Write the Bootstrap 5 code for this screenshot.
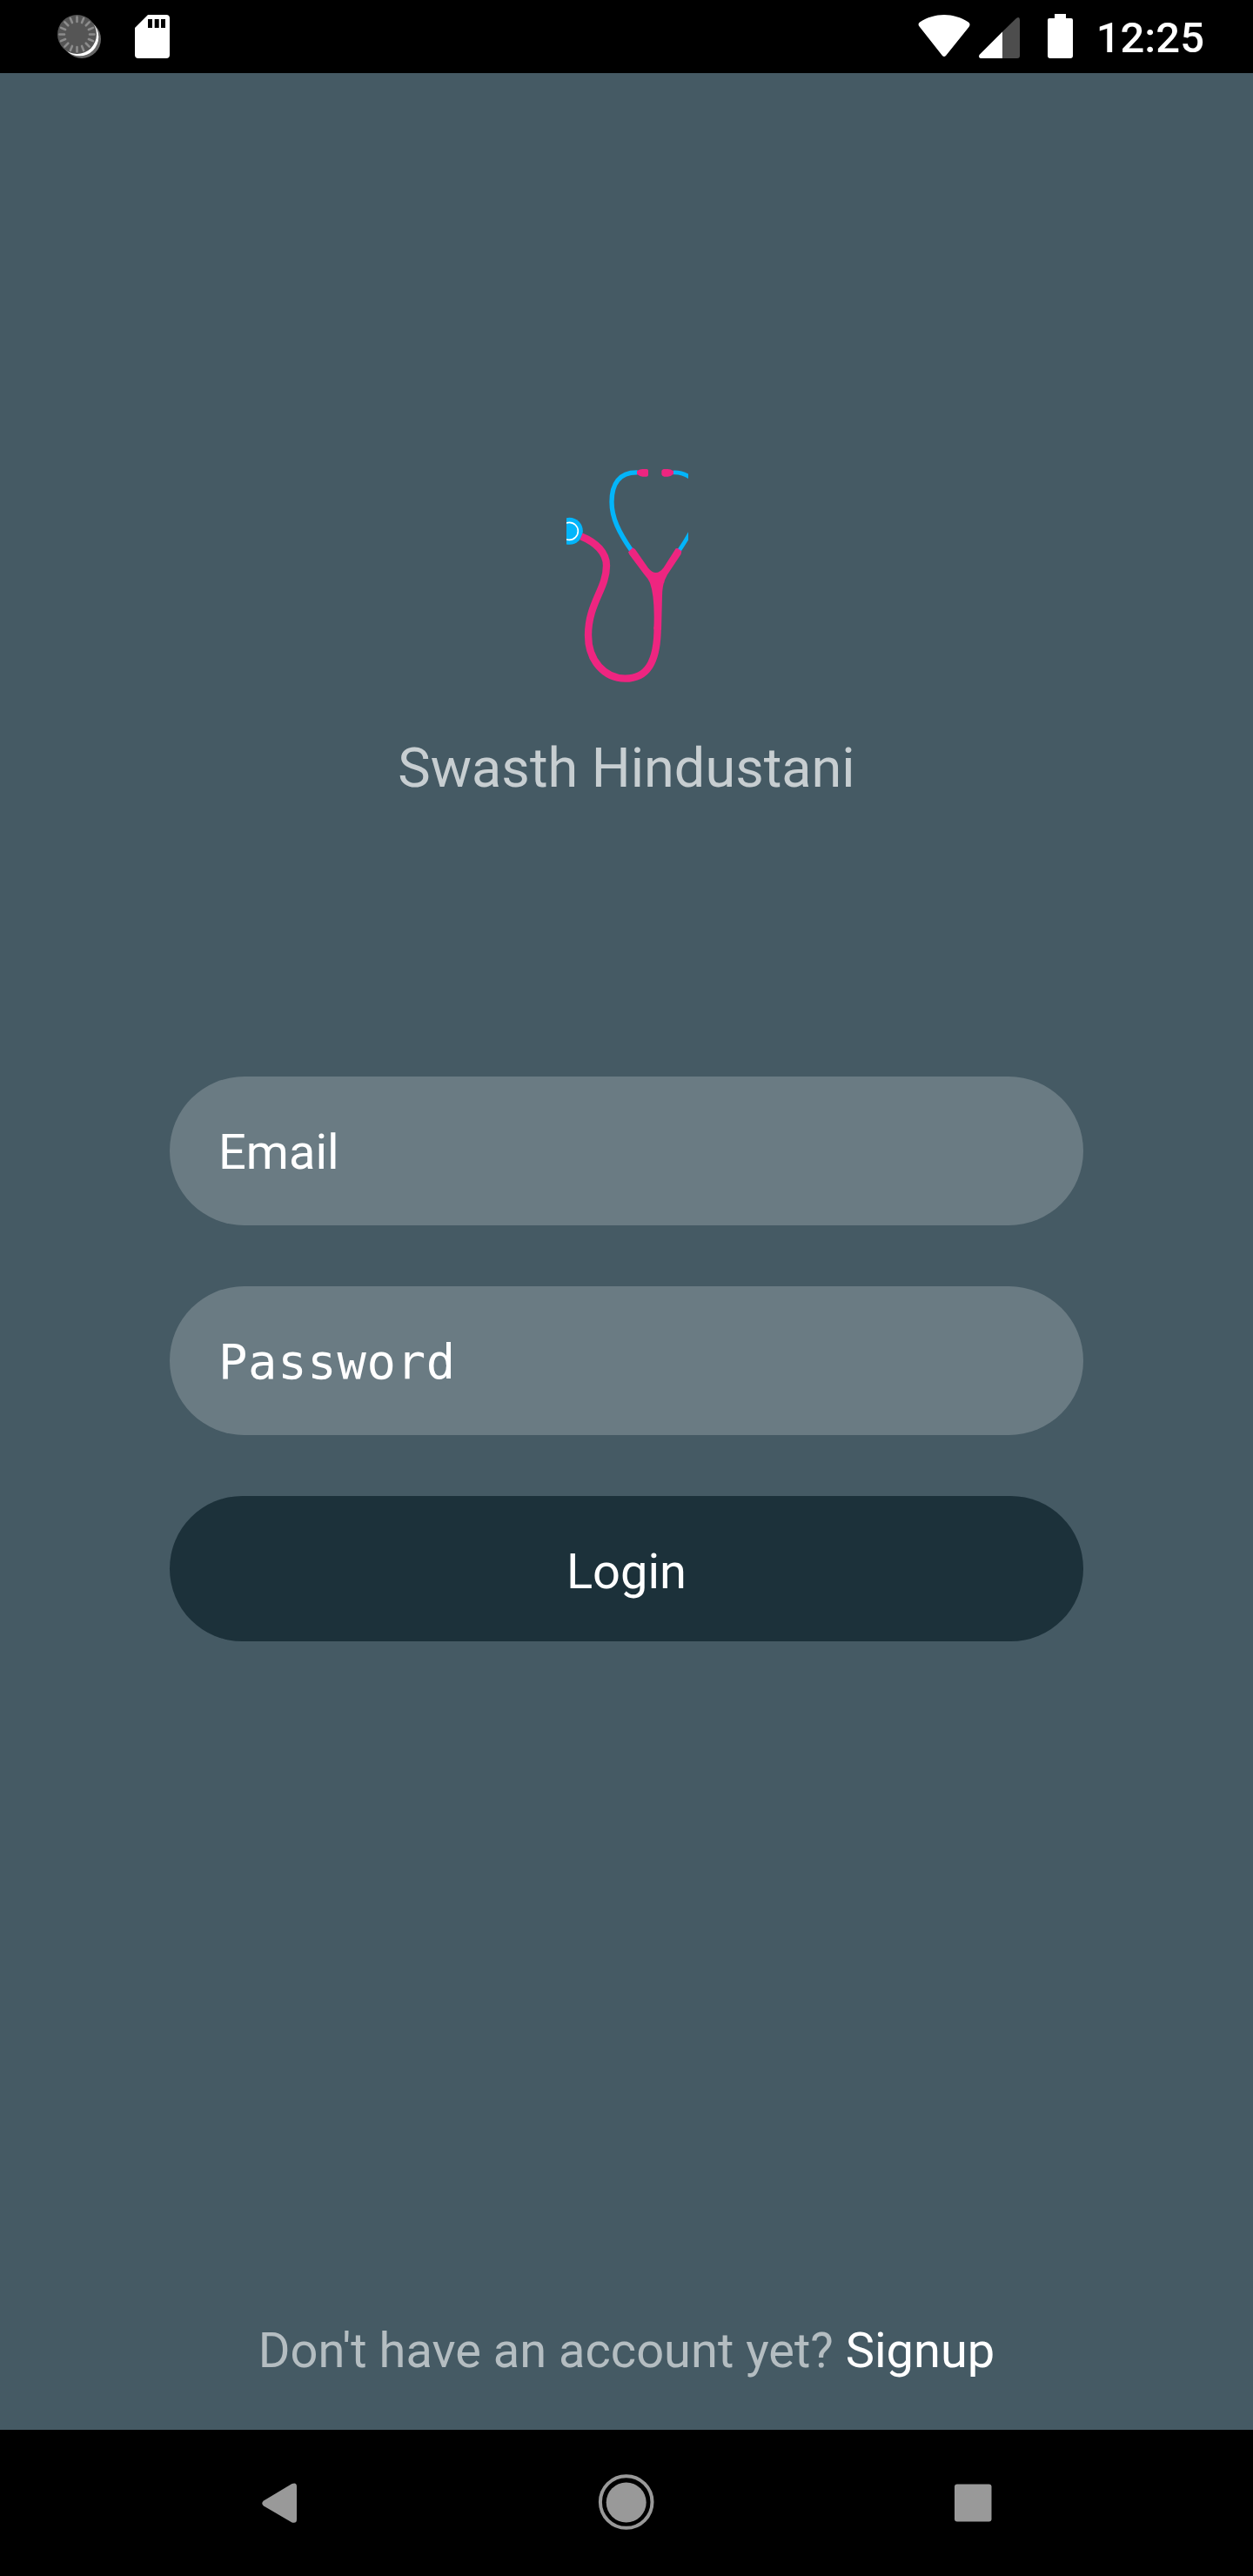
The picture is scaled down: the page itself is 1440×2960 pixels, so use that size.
<!DOCTYPE html>
<html lang="en">
<head>
<meta charset="utf-8">
<meta name="viewport" content="width=device-width, initial-scale=1">
<title>Swasth Hindustani</title>
<link rel="stylesheet" href="https://cdn.jsdelivr.net/npm/bootstrap@5.3.0/dist/css/bootstrap.min.css">
<style>
body{background:#455a64;font-family:Roboto,sans-serif;font-size:56px;line-height:66px}
.phone{width:1440px;height:2960px}
.statusbar{height:84px;flex:none;padding:0 56px 0 66px}
.clock{font-size:49px;font-weight:500;line-height:88px;height:84px;margin-left:25px}
.brand{padding-top:452px}
.brand-name{font-size:63px;line-height:74px;margin-top:60px;color:rgba(255,255,255,.7)}
.login-form{width:1050px;gap:70px;margin-top:317px}
.field{height:171px;padding:2px 56px 0;border:0;background:rgba(255,255,255,.2)!important;color:#fff;font-size:56px;line-height:66px;box-shadow:none}
.field::placeholder{color:#fff;opacity:1}
.field-mono{font-family:"DejaVu Sans Mono",monospace;font-size:55.5px;letter-spacing:.7px}
.btn-login{height:167px;background:#1c313a;color:#fff;font-size:56px;line-height:66px;border:0;padding:6px 0 0}
.signup-row{color:rgba(255,255,255,.6);padding-bottom:58px}
.navkeys{height:168px;flex:none;padding:0 281px}
svg{display:block;flex:none}
</style>
</head>
<body>
<div class="phone d-flex flex-column overflow-hidden">
  <header class="statusbar bg-black d-flex text-white">
    <svg width="50" height="84" viewBox="66 0 50 84">
      <circle cx="94" cy="45" r="22" fill="#666"/>
      <circle cx="91.500" cy="42.500" r="21.800" fill="#fff"/>
      <circle cx="88.500" cy="39.500" r="22.500" fill="#555"/>
      <g stroke="#8c8c8c" stroke-width="2.600" stroke-linecap="round" transform="translate(88.5 39.5)">
        <path d="M14.500 0H20M-14.500 0H-20M0 14.500V20M0-14.500V-20"/>
        <path transform="rotate(22.500)" d="M14.500 0H20M-14.500 0H-20M0 14.500V20M0-14.500V-20"/>
        <path transform="rotate(45)" d="M14.500 0H20M-14.500 0H-20M0 14.500V20M0-14.500V-20"/>
        <path transform="rotate(67.500)" d="M14.500 0H20M-14.500 0H-20M0 14.500V20M0-14.500V-20"/>
      </g>
    </svg>
    <svg width="40" height="84" viewBox="155 0 40 84" style="margin-left:39px">
      <path d="M170 17H191Q195 17 195 21V63Q195 67 191 67H159Q155 67 155 63V32Z" fill="#fff"/>
      <path d="M170 22h5v10h-5zM177.700 22h5v10h-5zM185 22h5v10h-5z" fill="#000"/>
    </svg>
    <svg class="ms-auto" width="180" height="84" viewBox="1054 0 180 84">
      <path d="M1056 31C1054 29 1054 27 1056 25.500C1073 14 1095 14 1112 25.500C1114 27 1114 29 1112.500 31L1086 64Q1084 66 1082 64Z" fill="#fff"/>
      <path d="M1151 36.500L1167 21Q1171 18.500 1171 23V64Q1171 67 1168 67H1151Z" fill="#4d4d4d"/>
      <path d="M1151 36.500V67H1126Q1123 66 1124.500 63Z" fill="#fff"/>
      <path d="M1211 16H1224V21H1230Q1232 21 1232 23V64Q1232 67 1229 67H1206Q1203 67 1203 64V23Q1203 21 1205 21H1211Z" fill="#fff"/>
    </svg>
    <div class="clock">12:25</div>
  </header>

  <main class="flex-grow-1 d-flex flex-column align-items-center">
    <div class="brand d-flex flex-column align-items-center">
      <svg width="140" height="250" viewBox="63 48 420 750" style="margin-left:2px">
        <g fill="none" stroke="#03b5fa">
          <path d="M308 68.500C245 67 219 108 219 170C219 225 244 275 286 336" stroke-width="16"/>
          <path d="M430 69Q464 67 492 88M450 340Q471 310 492 272" stroke-width="14"/>
        </g>
        <circle cx="73" cy="271" r="46.500" fill="#03b5fa"/>
        <circle cx="73" cy="271" r="30" fill="none" stroke="#fff" stroke-width="5"/>
        <path d="M114 289C165 310 201 345 201 390C201 470 138 520 138 630C138 718 195 779 265 779C340 779 377 725 377 600" fill="none" stroke="#ee2580" stroke-width="25"/>
        <path d="M276 343L292 328L300 334L345 398Q372 431 398 397L440 331L446 330L460 340L458 350L411 421Q393 450 393 495L390 612L364 610Q369 500 351 449Q345 435 331 420L280 352Z" fill="#ee2580"/>
        <path d="M306 64Q316 57 326 57H340Q345 57 345 62V78Q345 83 338 83H326Q315 82 306 74ZM432 64Q422 57 412 57H398Q391 59 391 64V76Q394 83 400 83H412Q423 82 432 74Z" fill="#ee2580"/>
      </svg>
      <div class="brand-name">Swasth Hindustani</div>
    </div>
    <form class="login-form d-flex flex-column">
      <input class="field form-control rounded-pill" type="text" placeholder="Email" aria-label="Email">
      <input class="field field-mono form-control rounded-pill" type="password" placeholder="Password" aria-label="Password">
      <button class="btn btn-login rounded-pill" type="button">Login</button>
    </form>
    <div class="signup-row mt-auto">Don't have an account yet? <a href="#" class="text-white text-decoration-none">Signup</a></div>
  </main>

  <footer class="navkeys bg-black d-flex align-items-center justify-content-between">
    <svg width="80" height="168" viewBox="281 0 80 168"><path d="M303 81.500L335.500 62Q341 60 341 65V103Q341 108 335.500 106.500L303 87.500Q299.500 84.500 303 81.500Z" fill="#999"/></svg>
    <svg width="80" height="168" viewBox="680 0 80 168"><circle cx="719.700" cy="83" r="29.800" fill="none" stroke="#999" stroke-width="4"/><circle cx="719.700" cy="83.500" r="23" fill="#999"/></svg>
    <svg width="80" height="168" viewBox="1079 0 80 168"><rect x="1097" y="62.500" width="42.500" height="43" rx="3" fill="#999"/></svg>
  </footer>
</div>
<script src="https://cdn.jsdelivr.net/npm/bootstrap@5.3.0/dist/js/bootstrap.bundle.min.js"></script>
</body>
</html>
